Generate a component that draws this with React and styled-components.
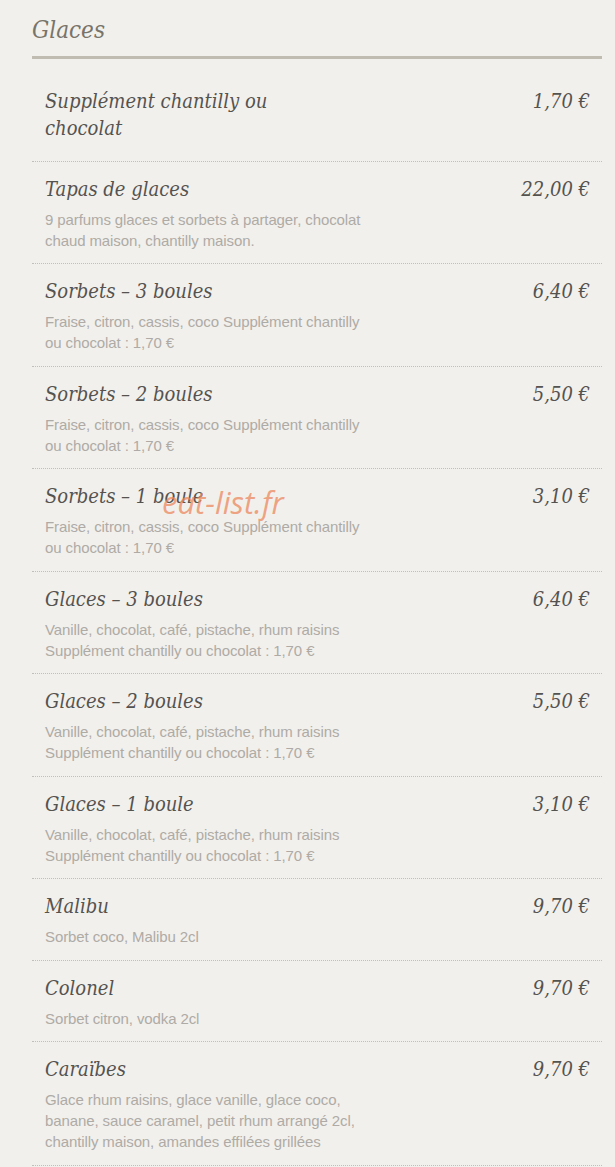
import React from "react";
import styled, { createGlobalStyle } from "styled-components";

const GlobalStyle = createGlobalStyle`
  html, body {
    margin: 0;
    padding: 0;
    background: #f2f0ec;
  }
`;

const serif = `"DejaVu Serif Condensed", "DejaVu Serif", "Liberation Serif", serif`;

const Page = styled.div`
  position: relative;
  padding: 0 13px 0 32px;
  min-height: 1167px;
  background: #f2f0ec;
`;

const Title = styled.h2`
  margin: 0;
  padding: 15px 0 11px;
  font-family: ${serif};
  font-style: italic;
  font-weight: normal;
  font-size: 24px;
  line-height: 30px;
  color: #78746a;
  border-bottom: 3px solid #c1bcb1;
`;

const List = styled.div`
  padding-top: 15px;
`;

const Item = styled.div`
  display: flex;
  justify-content: space-between;
  padding: 14px 12px 12.5px 13px;
  border-bottom: 1px dotted #c3bfb8;
`;

const Info = styled.div`
  width: 322px;
`;

const Name = styled.div`
  max-width: 290px;
  font-family: ${serif};
  font-style: italic;
  font-size: 20px;
  line-height: 27px;
  color: #555350;
  margin-bottom: 6px;
`;

const Desc = styled.div`
  font-family: "Liberation Sans", Arial, sans-serif;
  font-size: 15px;
  line-height: 21px;
  color: #aeaba6;
  letter-spacing: -0.1px;
`;

const Price = styled.div`
  font-family: ${serif};
  font-style: italic;
  font-size: 20px;
  line-height: 27px;
  color: #555350;
  white-space: nowrap;
`;

const Watermark = styled.div`
  position: absolute;
  left: 162px;
  top: 484px;
  font-family: "Open Sans", "Noto Sans", sans-serif;
  font-style: italic;
  font-size: 31px;
  line-height: 36px;
  color: rgba(236, 136, 94, 0.75);
  pointer-events: none;
`;

const items = [
  { name: "Supplément chantilly ou chocolat", price: "1,70 €" },
  {
    name: "Tapas de glaces",
    price: "22,00 €",
    desc: "9 parfums glaces et sorbets à partager, chocolat chaud maison, chantilly maison.",
  },
  {
    name: "Sorbets – 3 boules",
    price: "6,40 €",
    desc: "Fraise, citron, cassis, coco Supplément chantilly ou chocolat : 1,70 €",
  },
  {
    name: "Sorbets – 2 boules",
    price: "5,50 €",
    desc: "Fraise, citron, cassis, coco Supplément chantilly ou chocolat : 1,70 €",
  },
  {
    name: "Sorbets – 1 boule",
    price: "3,10 €",
    desc: "Fraise, citron, cassis, coco Supplément chantilly ou chocolat : 1,70 €",
  },
  {
    name: "Glaces – 3 boules",
    price: "6,40 €",
    desc: "Vanille, chocolat, café, pistache, rhum raisins Supplément chantilly ou chocolat : 1,70 €",
  },
  {
    name: "Glaces – 2 boules",
    price: "5,50 €",
    desc: "Vanille, chocolat, café, pistache, rhum raisins Supplément chantilly ou chocolat : 1,70 €",
  },
  {
    name: "Glaces – 1 boule",
    price: "3,10 €",
    desc: "Vanille, chocolat, café, pistache, rhum raisins Supplément chantilly ou chocolat : 1,70 €",
  },
  { name: "Malibu", price: "9,70 €", desc: "Sorbet coco, Malibu 2cl" },
  { name: "Colonel", price: "9,70 €", desc: "Sorbet citron, vodka 2cl" },
  {
    name: "Caraïbes",
    price: "9,70 €",
    desc: "Glace rhum raisins, glace vanille, glace coco, banane, sauce caramel, petit rhum arrangé 2cl, chantilly maison, amandes effilées grillées",
  },
];

const App = () => {
  return (
    <Page>
      <GlobalStyle />
      <Title>Glaces</Title>
      <List>
        {items.map((e) => (
          <Item key={e.name}>
            <Info>
              <Name>{e.name}</Name>
              {e.desc && <Desc>{e.desc}</Desc>}
            </Info>
            <Price>{e.price}</Price>
          </Item>
        ))}
      </List>
      <Watermark>eat-list.fr</Watermark>
    </Page>
  );
};

export default App;
